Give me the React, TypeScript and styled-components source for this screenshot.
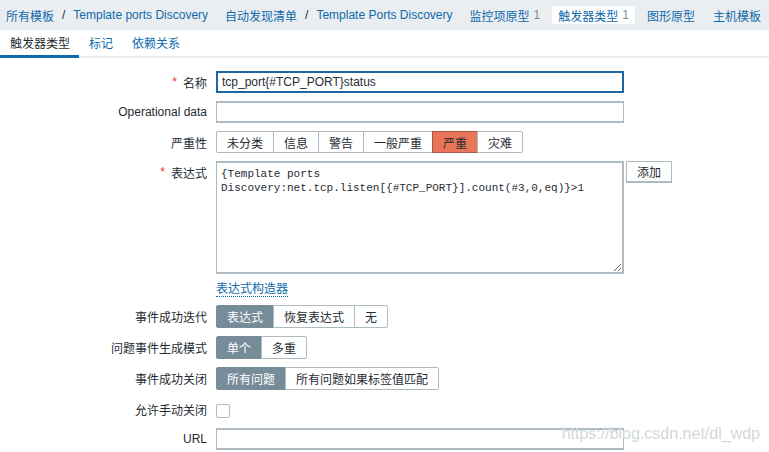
import React from 'react';
import styled, { createGlobalStyle } from 'styled-components';

const GlobalStyle = createGlobalStyle`
  html, body {
    margin: 0;
    padding: 0;
    background: #ffffff;
  }
  body {
    font-family: "Liberation Sans", Arial, "Noto Sans CJK SC", sans-serif;
    font-size: 12px;
    color: #1f2c33;
  }
`;

const Page = styled.div`
  position: relative;
  width: 769px;
  height: 452px;
  overflow: hidden;
`;

const Header = styled.div`
  display: flex;
  align-items: center;
  height: 30px;
  padding-left: 6px;
  background: #ebeef0;
  white-space: nowrap;
`;

const Crumbs = styled.div<{ $gap: number }>`
  display: flex;
  align-items: center;
  margin-right: ${p => p.$gap}px;
`;

const Link = styled.a`
  color: #0e6aad;
  text-decoration: none;
  cursor: pointer;
`;

const Sep = styled.span`
  color: #1f2c33;
  margin: 0 8px;
`;

const NavItem = styled.div<{ $active?: boolean }>`
  display: flex;
  align-items: center;
  height: 18px;
  padding: 0 6px;
  margin-right: 6px;
  background: ${p => (p.$active ? '#ffffff' : 'transparent')};
`;

const Count = styled.span`
  color: #768d99;
  margin-left: 4px;
`;

const Tabs = styled.div`
  display: flex;
  height: 26px;
  border-bottom: 2px solid #ebeef0;
`;

const Tab = styled.div<{ $active?: boolean }>`
  display: flex;
  align-items: center;
  padding: 0 9px 0 10px;
  color: ${p => (p.$active ? '#1f2c33' : '#0e6aad')};
  border-bottom: 3px solid ${p => (p.$active ? '#0e6aad' : 'transparent')};
  margin-bottom: -2px;
`;

const Form = styled.div`
  display: grid;
  grid-template-columns: 207px 408px 1fr;
  column-gap: 9px;
  row-gap: 8px;
  padding-top: 13px;
  align-items: start;
`;

const Label = styled.div`
  display: flex;
  justify-content: flex-end;
  align-items: center;
  min-height: 22px;
  white-space: nowrap;
`;

const Required = styled.span`
  color: #e33734;
  margin-right: 6px;
`;

const Field = styled.div<{ $span?: boolean }>`
  display: flex;
  align-items: center;
  min-height: 22px;
  grid-column: ${p => (p.$span ? '2 / 4' : 'auto')};
`;

const TextInput = styled.input<{ $focused?: boolean }>`
  box-sizing: border-box;
  width: 408px;
  height: 22px;
  padding: 0 4px;
  font: inherit;
  color: #1f2c33;
  background: #ffffff;
  border-style: solid;
  border-color: ${p => (p.$focused ? '#1f65a0' : '#acbbc2')};
  border-width: ${p => (p.$focused ? '2px' : '2px 1px')};
  outline: none;
`;

const Segments = styled.div`
  display: flex;
`;

const Segment = styled.div<{ $on?: boolean; $bg?: string }>`
  display: flex;
  align-items: center;
  box-sizing: border-box;
  height: ${p => (p.$bg ? '22px' : '23px')};
  padding: 0 10px;
  border: 1px solid ${p => (p.$on ? (p.$bg ? '#a45a47' : '#768d99') : '#acbbc2')};
  margin-left: -1px;
  background: ${p => (p.$on ? p.$bg || '#768d99' : '#ffffff')};
  color: ${p => (p.$on && !p.$bg ? '#ffffff' : '#1f2c33')};
  white-space: nowrap;
  &:first-child {
    margin-left: 0;
    border-radius: 2px 0 0 2px;
  }
  &:last-child {
    border-radius: 0 2px 2px 0;
  }
`;

const ExprArea = styled.textarea`
  box-sizing: border-box;
  width: 408px;
  height: 113px;
  padding: 4px 4px;
  font-family: "Liberation Mono", "Courier New", monospace;
  font-size: 11px;
  line-height: 14px;
  color: #1f2c33;
  border: 2px solid #acbbc2;
  border-left-width: 1px;
  outline: none;
  resize: both;
`;

const AddButton = styled.button`
  justify-self: start;
  box-sizing: border-box;
  height: 22px;
  padding: 0 10px;
  margin-left: -7px;
  font: inherit;
  color: #1f2c33;
  background: #ffffff;
  border: 1px solid #acbbc2;
  border-width: 1px 1px 2px 1px;
`;

const BuilderLink = styled.a`
  color: #0e6aad;
  text-decoration: none;
  border-bottom: 1px dotted #0e6aad;
  line-height: 14px;
  margin-top: -1px;
`;

const Checkbox = styled.span`
  box-sizing: border-box;
  width: 14px;
  height: 14px;
  margin-top: 4px;
  border: 1px solid #acbbc2;
  border-radius: 2px;
  background: #ffffff;
`;

const Watermark = styled.div`
  position: absolute;
  right: 9px;
  bottom: 9px;
  font-size: 16px;
  color: rgba(196, 202, 206, 0.75);
  text-shadow: 0 0 1px #ffffff;
  pointer-events: none;
`;

const Spacer = styled.div``;

const App: React.FC = () => {
  return (
    <Page>
      <GlobalStyle />
      <Header>
        <Crumbs $gap={17}>
          <Link>所有模板</Link>
          <Sep>/</Sep>
          <Link>Template ports Discovery</Link>
        </Crumbs>
        <Crumbs $gap={11}>
          <Link>自动发现清单</Link>
          <Sep>/</Sep>
          <Link>Template Ports Discovery</Link>
        </Crumbs>
        <NavItem>
          <Link>监控项原型</Link>
          <Count>1</Count>
        </NavItem>
        <NavItem $active>
          <Link>触发器类型</Link>
          <Count>1</Count>
        </NavItem>
        <NavItem>
          <Link>图形原型</Link>
        </NavItem>
        <NavItem>
          <Link>主机模板</Link>
        </NavItem>
      </Header>

      <Tabs>
        <Tab $active>触发器类型</Tab>
        <Tab>标记</Tab>
        <Tab>依赖关系</Tab>
      </Tabs>

      <Form>
        <Label><Required>*</Required>名称</Label>
        <Field $span>
          <TextInput $focused defaultValue="tcp_port{#TCP_PORT}status" />
        </Field>

        <Label>Operational data</Label>
        <Field $span>
          <TextInput defaultValue="" />
        </Field>

        <Label>严重性</Label>
        <Field $span>
          <Segments>
            <Segment $bg="#e97659">未分类</Segment>
            <Segment $bg="#e97659">信息</Segment>
            <Segment $bg="#e97659">警告</Segment>
            <Segment $bg="#e97659">一般严重</Segment>
            <Segment $bg="#e97659" $on>严重</Segment>
            <Segment $bg="#e97659">灾难</Segment>
          </Segments>
        </Field>

        <Label><Required>*</Required>表达式</Label>
        <Field>
          <ExprArea
            spellCheck={false}
            defaultValue={'{Template ports Discovery:net.tcp.listen[{#TCP_PORT}].count(#3,0,eq)}>1'}
          />
        </Field>
        <AddButton>添加</AddButton>

        <Spacer />
        <Field $span style={{ minHeight: 15 }}>
          <BuilderLink>表达式构造器</BuilderLink>
        </Field>

        <Label>事件成功迭代</Label>
        <Field $span>
          <Segments>
            <Segment $on>表达式</Segment>
            <Segment>恢复表达式</Segment>
            <Segment>无</Segment>
          </Segments>
        </Field>

        <Label>问题事件生成模式</Label>
        <Field $span>
          <Segments>
            <Segment $on>单个</Segment>
            <Segment>多重</Segment>
          </Segments>
        </Field>

        <Label>事件成功关闭</Label>
        <Field $span>
          <Segments>
            <Segment $on>所有问题</Segment>
            <Segment>所有问题如果标签值匹配</Segment>
          </Segments>
        </Field>

        <Label>允许手动关闭</Label>
        <Field $span>
          <Checkbox />
        </Field>

        <Label>URL</Label>
        <Field $span>
          <TextInput defaultValue="" />
        </Field>
      </Form>

      <Watermark>https://blog.csdn.net/dl_wdp</Watermark>
    </Page>
  );
};

export default App;
